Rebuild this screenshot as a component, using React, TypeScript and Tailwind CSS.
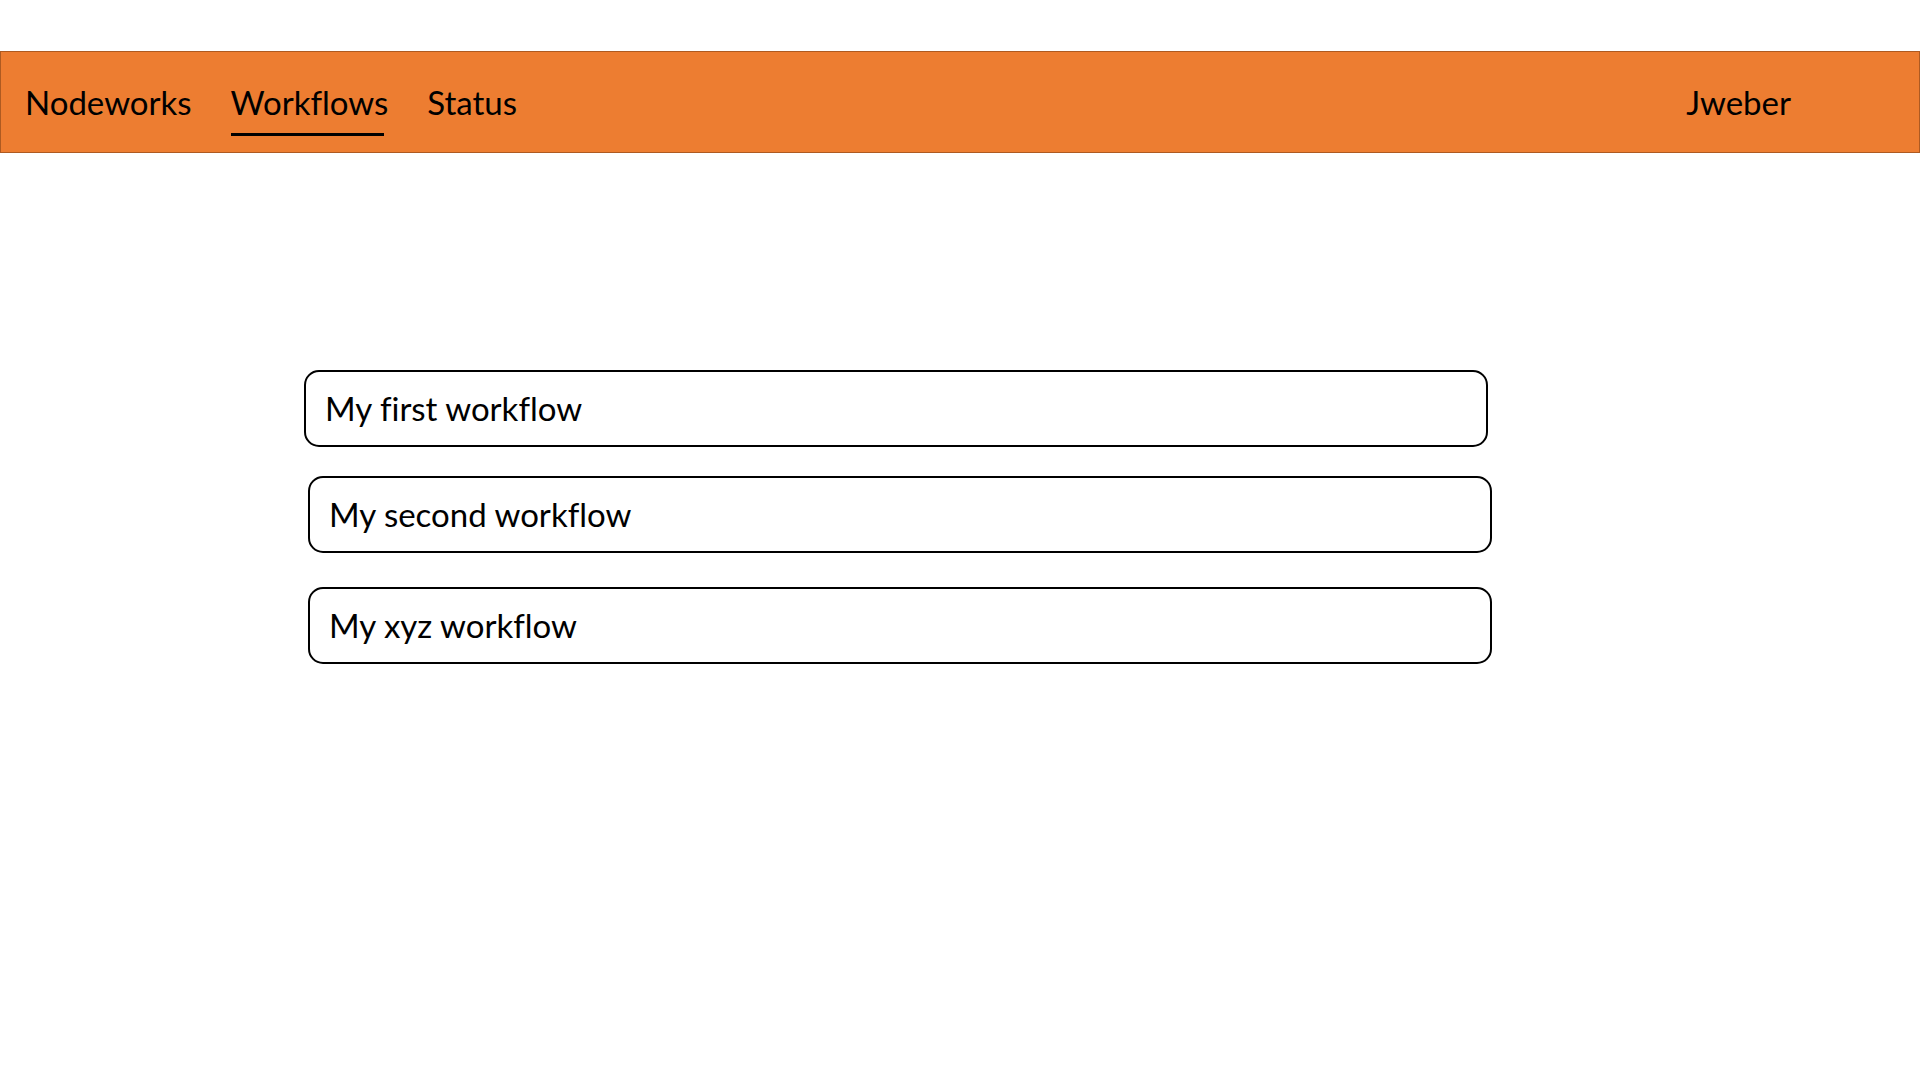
import React from 'react';

const workflows = [
  { name: 'My first workflow', shift: 'ml-[304px] w-[1184px]' },
  { name: 'My second workflow', shift: 'ml-[308px] w-[1184px] mt-[29px]' },
  { name: 'My xyz workflow', shift: 'ml-[308px] w-[1184px] mt-[34px]' },
];

const App = () => {
  return (
    <div className="min-h-screen bg-white text-black font-['Lato','Open_Sans',sans-serif] [font-variant-ligatures:none]">
      <div className="h-[51px]" />

      {/* Top bar */}
      <header className="h-[102px] border border-[#ae5a21] bg-[#ed7d31] flex items-center text-[33px] leading-none">
        <nav className="flex items-center gap-[39px] ml-[24px]">
          <a>Nodeworks</a>
          <a className="relative">
            Workflows
            <span className="absolute left-0 right-[4px] top-[47px] h-[3px] bg-black" />
          </a>
          <a>Status</a>
        </nav>
        <div className="ml-auto mr-[128px]">Jweber</div>
      </header>

      {/* Workflow list */}
      <main className="pt-[217px] flex flex-col">
        {workflows.map((wf) => (
          <div
            key={wf.name}
            className={`${wf.shift} h-[77px] border-2 border-black rounded-[15px] flex items-center pl-[19px] text-[33px]`}
          >
            {wf.name}
          </div>
        ))}
      </main>
    </div>
  );
};

export default App;
